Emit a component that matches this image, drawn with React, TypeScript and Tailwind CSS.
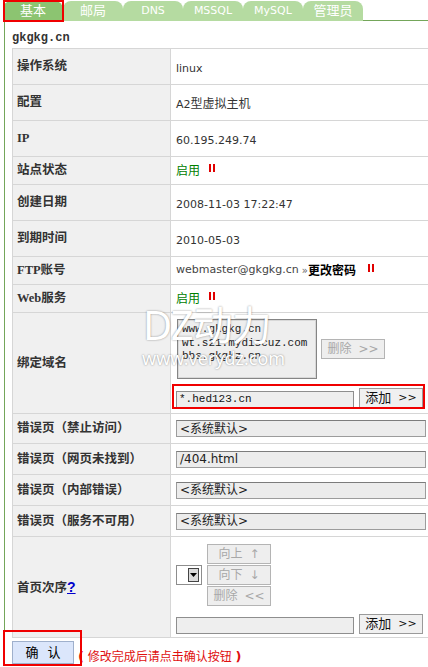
const ui = "font-['DejaVu_Sans','Noto_Sans_CJK_SC',sans-serif]";
const lbl = "font-['Liberation_Serif','Noto_Sans_CJK_SC',serif]";
const mono = "font-['Liberation_Mono','Noto_Sans_CJK_SC',monospace]";

const Bars = () => (
  <span className="inline-flex gap-[2px] mb-[6px]">
    <span className="w-[2px] h-[8px] bg-[#e00000]" />
    <span className="w-[2px] h-[8px] bg-[#e00000]" />
  </span>
);

const Btn = ({ children, off, cls = "" }: { children: React.ReactNode; off?: boolean; cls?: string }) => (
  <div
    className={
      "w-[64px] h-[20px] flex items-center justify-center gap-[7px] text-[12px] border " +
      (off ? "border-[#b4b4b4] bg-[#eeeeee] text-[#a8a8a8] " : "border-[#9a9a9a] bg-[#f0f0f0] text-[#111] ") +
      cls
    }
  >
    {children}
  </div>
);

const Field = ({ text, w = "w-[250px]" }: { text: string; w?: string }) => (
  <div className={w + " h-[17px] flex items-center pl-[3px] bg-[#ececec] border border-[#9c9c9c] border-t-[#7c7c7c] text-[12px] text-[#222]"}>
    {text}
  </div>
);

const Add = () => (
  <Btn>
    <span className="text-[13px]">添加</span>
    <span className="text-[11px]">&gt;&gt;</span>
  </Btn>
);

export default function App() {
  const tabs = ["基本", "邮局", "DNS", "MSSQL", "MySQL", "管理员"];

  const rows: { label: React.ReactNode; h: string; body: React.ReactNode }[] = [
    { label: "操作系统", h: "h-[36px]", body: <span className="text-[11px]">linux</span> },
    { label: "配置", h: "h-[36px]", body: <span className="text-[11px]">A2<span className="text-[12px]">型虚拟主机</span></span> },
    { label: "IP", h: "h-[36px]", body: <span className="text-[11px]">60.195.249.74</span> },
    {
      label: "站点状态",
      h: "h-[28px]",
      body: (
        <div className="flex items-center gap-[9px]">
          <span className="text-[12px] text-[#008000]">启用</span>
          <Bars />
        </div>
      ),
    },
    { label: "创建日期", h: "h-[36px]", body: <span className="text-[11px]">2008-11-03 17:22:47</span> },
    { label: "到期时间", h: "h-[36px]", body: <span className="text-[11px]">2010-05-03</span> },
    {
      label: "FTP账号",
      h: "h-[28px]",
      body: (
        <div className="flex items-center">
          <span className="text-[11px] text-[#444]">webmaster@gkgkg.cn</span>
          <span className="text-[10px] text-[#666] ml-[3px]">»</span>
          <span className="text-[12px] font-bold text-black">更改密码</span>
          <span className="ml-[12px] flex">
            <Bars />
          </span>
        </div>
      ),
    },
    {
      label: "Web服务",
      h: "h-[28px]",
      body: (
        <div className="flex items-center gap-[9px]">
          <span className="text-[12px] text-[#008000]">启用</span>
          <Bars />
        </div>
      ),
    },
    {
      label: "绑定域名",
      h: "h-[101px]",
      body: (
        <div className="flex flex-col gap-[9px] pt-[1px]">
          <div className="flex items-center gap-[4px] ml-[1px]">
            <div className={"w-[140px] h-[60px] bg-[#eeeeee] border border-[#858585] shadow-[inset_0_0_0_1px_#d8d8d8] pl-[4px] pt-[3px] text-[11px] leading-[13.5px] text-[#222] " + mono}>
              <div>www.gkgkg.cn</div>
              <div>wt.s21.mydiscuz.com</div>
              <div>bbs.gkgkz.cn</div>
            </div>
            <Btn off>
              <span>删除</span>
              <span>&gt;&gt;</span>
            </Btn>
          </div>
          <div className="flex items-end gap-[5px]">
            <div className={"w-[178px] h-[17px] flex items-center pl-[2px] bg-[#eeeeee] border border-[#8e8e8e] text-[11px] text-[#111] " + mono}>
              *.hed123.cn
            </div>
            <Add />
          </div>
        </div>
      ),
    },
    { label: "错误页（禁止访问）", h: "h-[30px]", body: <Field text="<系统默认>" /> },
    { label: "错误页（网页未找到）", h: "h-[31px]", body: <Field text="/404.html" /> },
    { label: "错误页（内部错误）", h: "h-[31px]", body: <Field text="<系统默认>" /> },
    { label: "错误页（服务不可用）", h: "h-[31px]", body: <Field text="<系统默认>" /> },
    {
      label: (
        <>
          首页次序
          <span className="text-[#0000cc] underline font-['Liberation_Sans',sans-serif] text-[14px]">?</span>
        </>
      ),
      h: "h-[101px]",
      body: (
        <div className="flex flex-col gap-[8px] pt-[4px]">
          <div className="flex items-center gap-[5px]">
            <div className="w-[26px] h-[20px] border border-[#8d8d8d] bg-white flex items-center justify-end pr-[2px]">
              <div className="w-[11px] h-[14px] border border-[#444] bg-[#dcdcdc] flex items-center justify-center">
                <svg width="7" height="4" viewBox="0 0 7 4">
                  <path d="M0 0h7L3.5 4z" fill="#000" />
                </svg>
              </div>
            </div>
            <div className="flex flex-col gap-[1px]">
              <Btn off>
                <span>向上</span>
                <span>↑</span>
              </Btn>
              <Btn off>
                <span>向下</span>
                <span>↓</span>
              </Btn>
              <Btn off>
                <span>删除</span>
                <span>&lt;&lt;</span>
              </Btn>
            </div>
          </div>
          <div className="flex items-end gap-[5px]">
            <div className="w-[178px] h-[17px] bg-[#eeeeee] border border-[#8e8e8e]" />
            <Add />
          </div>
        </div>
      ),
    },
  ];

  return (
    <div className={"relative w-[428px] h-[667px] overflow-hidden bg-white text-[#333] " + ui}>
      <div className="flex items-end h-[21px] pl-[3px]">
        {tabs.map((t, i) => (
          <div
            key={t}
            className={
              "w-[60px] h-[20px] rounded-t-[8px] flex items-center justify-center text-white " +
              (i === 0 ? "bg-[#8cc471] " : "bg-[#b5dba1] ") +
              (/[A-Z]/.test(t) ? "text-[11px]" : "text-[13px]")
            }
          >
            {t}
          </div>
        ))}
        <div className="flex-1 border-b border-[#74a65a]" />
      </div>

      <div className="ml-[4px] border-l border-[#74a65a] pl-[7px]">
        <div className={"h-[27px] flex items-center pt-[7px] text-[12px] font-bold text-[#333] " + mono}>gkgkg.cn</div>
        <table className="w-[418px] border-collapse">
          <tbody>
            {rows.map((r, i) => (
              <tr key={i} className={r.h}>
                <td className={"w-[158px] bg-[#f0f0f0] border border-[#d6d6d6] pl-[4px] text-[12.5px] font-bold text-[#333] " + lbl}>
                  {r.label}
                </td>
                <td className="border border-[#d6d6d6] pl-[5px] align-middle">{r.body}</td>
              </tr>
            ))}
          </tbody>
        </table>
      </div>

      <div className="flex items-center pl-[12px] pt-[1px] gap-[4px]">
        <div className="w-[62px] h-[23px] bg-[#dbe6fb] border border-[#9fb0cc] flex items-center justify-center gap-[9px] text-[13px] text-black">
          <span>确</span>
          <span>认</span>
        </div>
        <span className="text-[12px] text-[#e01010] mt-[8px]">
          <b className="text-[13px]">(</b> 修改完成后请点击确认按钮 <b className="text-[13px]">)</b>
        </span>
      </div>

      {/* annotations + watermark */}
      <div className="absolute left-[3px] top-0 w-[61px] h-[22px] border-2 border-[#f00000]" />
      <div className="absolute left-[172px] top-[384px] w-[253px] h-[25px] border-2 border-[#f00000]" />
      <div className="absolute left-[3px] top-[630px] w-[79px] h-[36px] border-2 border-[#f00000]" />
      <div className="absolute left-[143px] top-[304px] text-white pointer-events-none [text-shadow:0_0_2px_rgba(0,0,0,0.45)] font-['Noto_Sans','Noto_Sans_CJK_SC',sans-serif] font-normal">
        <div className="text-[40px] leading-[42px] tracking-[-1px]">DZ动力</div>
        <div className="text-[18px] leading-[20px] -ml-[1px] mt-[2px]">www.verydz.com</div>
      </div>
    </div>
  );
}
